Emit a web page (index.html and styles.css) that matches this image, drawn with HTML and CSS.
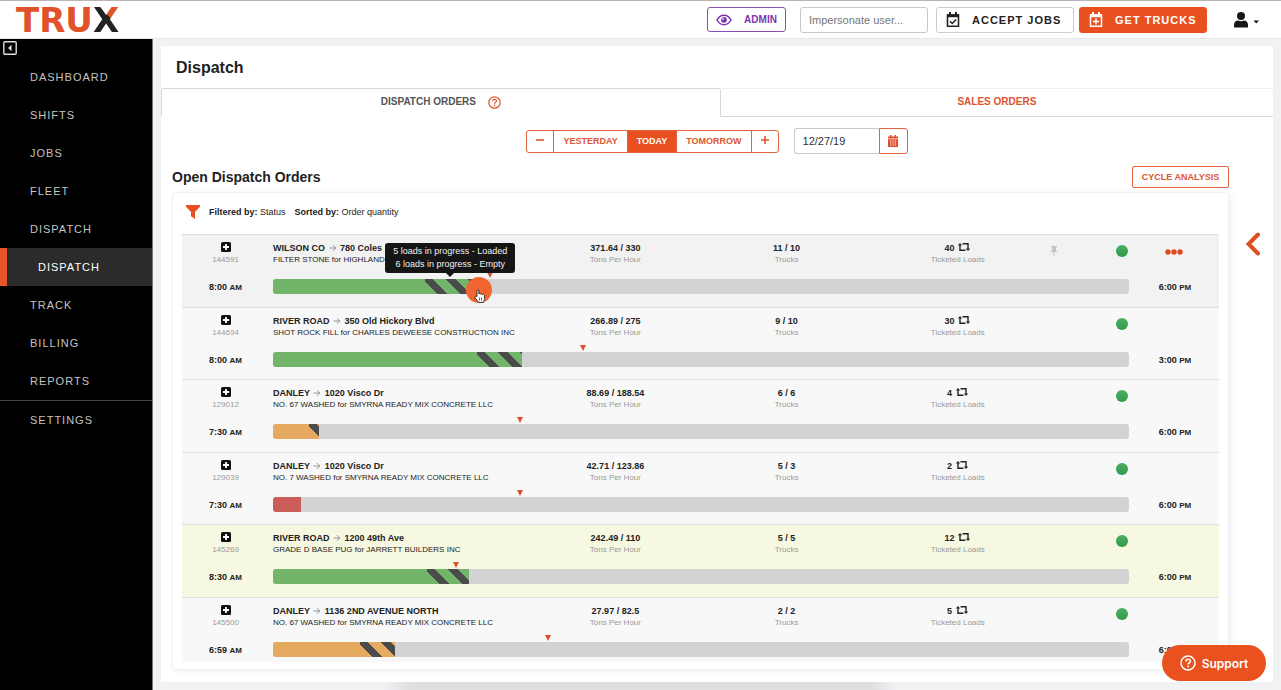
FILE: index.html
```html
<!DOCTYPE html>
<html lang="en">
<head>
    <meta charset="UTF-8">
    <meta name="viewport" content="width=device-width, initial-scale=1.0">
    <title>TRUX - Dispatch</title>
    <link rel="stylesheet" href="styles.css">
</head>
<body>
<!-- shared icons -->
<svg class="sprite" aria-hidden="true">
    <symbol id="i-plus" viewBox="0 0 10 10">
        <rect width="10" height="10" rx="1.5" fill="#111"/>
        <path d="M5 2v6M2 5h6" stroke="#fff" stroke-width="1.8"/>
    </symbol>
    <symbol id="i-arrow" viewBox="0 0 8 8">
        <path d="M0.5 4h6M4 1.2L6.8 4 4 6.8" fill="none" stroke="#888" stroke-width="0.9"/>
    </symbol>
    <symbol id="i-loop" viewBox="0 0 14 10">
        <path d="M5.5 1.8H11v5M8.500 8.2H3v-5" fill="none" stroke="#222" stroke-width="1.4"/>
        <path d="M0.8 3.6L3 1l2.2 2.600zM8.800 6.400L11 9l2.200-2.600z" fill="#222"/>
    </symbol>
    <symbol id="i-help" viewBox="0 0 16 16">
        <circle cx="8" cy="8" r="7" fill="none" stroke="currentColor" stroke-width="1.5"/>
        <path d="M5.8 6.4c0-3 4.6-2.9 4.6-.2 0 1.8-2.3 1.7-2.3 3.3" fill="none" stroke="currentColor" stroke-width="1.5"/>
        <circle cx="8.1" cy="11.6" r="1" fill="currentColor"/>
    </symbol>
</svg>

<header class="topbar">
    <a class="logo" href="#" aria-label="TRUX">TRU<span>X</span></a>
    <div class="top-actions">
        <button class="btn-admin" type="button">
            <svg width="16" height="12" viewBox="0 0 16 12"><path d="M1 6c3.4-6.2 10.6-6.2 14 0-3.4 6.2-10.6 6.2-14 0z" fill="none" stroke="currentColor" stroke-width="1.5"/><circle cx="8" cy="5.8" r="2.9" fill="currentColor"/><circle cx="7" cy="4.8" r="0.9" fill="#fff"/></svg>
            ADMIN
        </button>
        <input class="impersonate" type="text" placeholder="Impersonate user..." aria-label="Impersonate user">
        <button class="btn-top" type="button">
            <svg width="14" height="16" viewBox="0 0 14 16"><path d="M1.5 3h11v11.2h-11z" fill="none" stroke="currentColor" stroke-width="1.6"/><path d="M1 2.2h12v3H1zM3 0h2v3H3zM9 0h2v3H9z" fill="currentColor"/><path d="M4 9.3l2.2 2.2 4-4" fill="none" stroke="currentColor" stroke-width="1.5"/></svg>
            ACCEPT JOBS
        </button>
        <button class="btn-top btn-primary" type="button">
            <svg width="14" height="16" viewBox="0 0 14 16"><path d="M1.5 3h11v11.2h-11z" fill="none" stroke="currentColor" stroke-width="1.6"/><path d="M1 2.2h12v3H1zM3 0h2v3H3zM9 0h2v3H9z" fill="currentColor"/><path d="M7 6.5v6M4 9.5h6" fill="none" stroke="currentColor" stroke-width="1.5"/></svg>
            GET TRUCKS
        </button>
        <button class="user-menu" type="button" aria-label="Account">
            <svg width="26" height="16" viewBox="0 0 26 16"><circle cx="7" cy="4" r="4" fill="#161616"/><path d="M0 15.5V13c0-3 1.800-4.500 4-4.500 2 1 4 1 6 0 2.200 0 4 1.500 4 4.500v2.500z" fill="#161616"/><path d="M19.500 8.500h5.500l-2.750 3z" fill="#161616"/></svg>
        </button>
    </div>
</header>

<div class="layout">
    <nav class="sidebar">
        <button class="collapse" type="button" aria-label="Collapse menu">
            <svg width="14" height="14" viewBox="0 0 14 14"><rect x="0.8" y="0.8" width="12.4" height="12.4" rx="1" fill="none" stroke="#ddd" stroke-width="1.4"/><path d="M8.5 3.8v6.4L5 7z" fill="#ddd"/></svg>
        </button>
        <a href="#">DASHBOARD</a>
        <a href="#">SHIFTS</a>
        <a href="#">JOBS</a>
        <a href="#">FLEET</a>
        <a href="#">DISPATCH</a>
        <a href="#" class="active">DISPATCH</a>
        <a href="#">TRACK</a>
        <a href="#">BILLING</a>
        <a href="#">REPORTS</a>
        <a href="#" class="settings">SETTINGS</a>
    </nav>

    <main class="page">
        <h1>Dispatch</h1>
        <div class="tabs">
            <a href="#" class="tab current">DISPATCH ORDERS <svg width="13" height="13"><use href="#i-help"/></svg></a>
            <a href="#" class="tab">SALES ORDERS</a>
        </div>

        <div class="date-bar">
            <div class="day-group">
                <button type="button" aria-label="Previous day"><svg width="8" height="8" viewBox="0 0 8 8"><path d="M0 4h8" stroke="currentColor" stroke-width="1.6"/></svg></button>
                <button type="button">YESTERDAY</button>
                <button type="button" class="on">TODAY</button>
                <button type="button">TOMORROW</button>
                <button type="button" aria-label="Next day"><svg width="8" height="8" viewBox="0 0 8 8"><path d="M0 4h8M4 0v8" stroke="currentColor" stroke-width="1.6"/></svg></button>
            </div>
            <div class="date-pick">
                <input type="text" value="12/27/19" aria-label="Date">
                <button type="button" aria-label="Open calendar"><svg width="10" height="12" viewBox="0 0 10 12"><path d="M0 1.5h10v2H0zM2 0h1.5v2H2zM6.5 0H8v2H6.5zM0 4.2h10V12H0z" fill="currentColor"/><path d="M2 6h6M2 8h6M2 10h6" stroke="#fff" stroke-width="1" stroke-dasharray="1.2 1.2"/></svg></button>
            </div>
        </div>

        <div class="content">
            <section class="orders">
                <div class="orders-head">
                    <h2>Open Dispatch Orders</h2>
                    <button type="button" class="btn-cycle">CYCLE ANALYSIS</button>
                </div>
                <div class="panel">
                    <div class="filters">
                        <svg width="14" height="14" viewBox="0 0 14 14"><path d="M0 0h14v1.8L9 7v7l-4-2.8V7L0 1.8z" fill="#e8501f"/></svg>
                        <span><b>Filtered by:</b> Status</span>
                        <span><b>Sorted by:</b> Order quantity</span>
                    </div>
                    <div class="scroller">
                        <ul class="order-list">
                            <li class="order hovered">
                                <div class="order-id"><button type="button" aria-label="Expand"><svg width="10" height="10"><use href="#i-plus"/></svg></button><small>144591</small></div>
                                <div class="info">
                                    <div class="name"><b>WILSON CO <svg width="8" height="8"><use href="#i-arrow"/></svg> 780 Coles</b><span>FILTER STONE for HIGHLAND H</span></div>
                                    <div class="stat"><b>371.64 / 330</b><span>Tons Per Hour</span></div>
                                    <div class="stat"><b>11 / 10</b><span>Trucks</span></div>
                                    <div class="stat"><b>40 <svg width="14" height="10"><use href="#i-loop"/></svg></b><span>Ticketed Loads</span></div>
                                    <div class="state"><svg width="8" height="10" viewBox="0 0 8 10"><path d="M1 0h6v1.2H6v3l1.5 1.8h-7L2 4.2v-3H1zM3.5 6h1v4h-1z" fill="#c4c4c4"/></svg><i class="dot"></i></div>
                                </div>
                                <button type="button" class="more" aria-label="More"><svg width="18" height="6" viewBox="0 0 18 6"><circle cx="3" cy="3" r="2.7"/><circle cx="9" cy="3" r="2.7"/><circle cx="15" cy="3" r="2.7"/></svg></button>
                                <time>8:00 <small>AM</small></time>
                                <div class="track green">
                                    <div class="done" style="width:17.8%"></div>
                                    <div class="moving" style="width:5.8%"><div class="tooltip">5 loads in progress - Loaded<br>6 loads in progress - Empty</div></div>
                                    <i class="marker" style="left:25.3%"></i>
                                    <div class="pointer" style="left:24.1%">
                                        <svg width="12" height="14" viewBox="0 0 12 14"><path d="M3 7.5V1.8c0-1.4 1.9-1.4 1.9 0V5c.4-.8 1.7-.6 1.9.2.5-.7 1.6-.4 1.8.4.6-.6 1.9-.3 1.9.8v3c0 2-1 2.5-1 4H4.3C4 11.8 2.2 10.6 1 8.8.3 7.5 1.9 6.5 3 7.5z" fill="#fff" stroke="#222" stroke-width="0.9"/><path d="M5.5 8.5v3M7.5 8.5v3" stroke="#222" stroke-width="0.7"/></svg>
                                    </div>
                                </div>
                                <time>6:00 <small>PM</small></time>
                            </li>
                            <li class="order">
                                <div class="order-id"><button type="button" aria-label="Expand"><svg width="10" height="10"><use href="#i-plus"/></svg></button><small>144694</small></div>
                                <div class="info">
                                    <div class="name"><b>RIVER ROAD <svg width="8" height="8"><use href="#i-arrow"/></svg> 350 Old Hickory Blvd</b><span>SHOT ROCK FILL for CHARLES DEWEESE CONSTRUCTION INC</span></div>
                                    <div class="stat"><b>266.89 / 275</b><span>Tons Per Hour</span></div>
                                    <div class="stat"><b>9 / 10</b><span>Trucks</span></div>
                                    <div class="stat"><b>30 <svg width="14" height="10"><use href="#i-loop"/></svg></b><span>Ticketed Loads</span></div>
                                    <div class="state"><i class="dot"></i></div>
                                </div>
                                <div></div>
                                <time>8:00 <small>AM</small></time>
                                <div class="track green">
                                    <div class="done" style="width:23.8%"></div>
                                    <div class="moving" style="width:5.3%"></div>
                                    <i class="marker" style="left:36.2%"></i>
                                </div>
                                <time>3:00 <small>PM</small></time>
                            </li>
                            <li class="order">
                                <div class="order-id"><button type="button" aria-label="Expand"><svg width="10" height="10"><use href="#i-plus"/></svg></button><small>129012</small></div>
                                <div class="info">
                                    <div class="name"><b>DANLEY <svg width="8" height="8"><use href="#i-arrow"/></svg> 1020 Visco Dr</b><span>NO. 67 WASHED for SMYRNA READY MIX CONCRETE LLC</span></div>
                                    <div class="stat"><b>88.69 / 188.54</b><span>Tons Per Hour</span></div>
                                    <div class="stat"><b>6 / 6</b><span>Trucks</span></div>
                                    <div class="stat"><b>4 <svg width="14" height="10"><use href="#i-loop"/></svg></b><span>Ticketed Loads</span></div>
                                    <div class="state"><i class="dot"></i></div>
                                </div>
                                <div></div>
                                <time>7:30 <small>AM</small></time>
                                <div class="track orange">
                                    <div class="done" style="width:4.2%"></div>
                                    <div class="moving" style="width:1.2%"></div>
                                    <i class="marker" style="left:28.9%"></i>
                                </div>
                                <time>6:00 <small>PM</small></time>
                            </li>
                            <li class="order">
                                <div class="order-id"><button type="button" aria-label="Expand"><svg width="10" height="10"><use href="#i-plus"/></svg></button><small>129039</small></div>
                                <div class="info">
                                    <div class="name"><b>DANLEY <svg width="8" height="8"><use href="#i-arrow"/></svg> 1020 Visco Dr</b><span>NO. 7 WASHED for SMYRNA READY MIX CONCRETE LLC</span></div>
                                    <div class="stat"><b>42.71 / 123.86</b><span>Tons Per Hour</span></div>
                                    <div class="stat"><b>5 / 3</b><span>Trucks</span></div>
                                    <div class="stat"><b>2 <svg width="14" height="10"><use href="#i-loop"/></svg></b><span>Ticketed Loads</span></div>
                                    <div class="state"><i class="dot"></i></div>
                                </div>
                                <div></div>
                                <time>7:30 <small>AM</small></time>
                                <div class="track red">
                                    <div class="done" style="width:3.3%"></div>
                                    <i class="marker" style="left:28.9%"></i>
                                </div>
                                <time>6:00 <small>PM</small></time>
                            </li>
                            <li class="order flagged">
                                <div class="order-id"><button type="button" aria-label="Expand"><svg width="10" height="10"><use href="#i-plus"/></svg></button><small>145269</small></div>
                                <div class="info">
                                    <div class="name"><b>RIVER ROAD <svg width="8" height="8"><use href="#i-arrow"/></svg> 1200 49th Ave</b><span>GRADE D BASE PUG for JARRETT BUILDERS INC</span></div>
                                    <div class="stat"><b>242.49 / 110</b><span>Tons Per Hour</span></div>
                                    <div class="stat"><b>5 / 5</b><span>Trucks</span></div>
                                    <div class="stat"><b>12 <svg width="14" height="10"><use href="#i-loop"/></svg></b><span>Ticketed Loads</span></div>
                                    <div class="state"><i class="dot"></i></div>
                                </div>
                                <div></div>
                                <time>8:30 <small>AM</small></time>
                                <div class="track green">
                                    <div class="done" style="width:18%"></div>
                                    <div class="moving" style="width:4.9%"></div>
                                    <i class="marker" style="left:21.4%"></i>
                                </div>
                                <time>6:00 <small>PM</small></time>
                            </li>
                            <li class="order">
                                <div class="order-id"><button type="button" aria-label="Expand"><svg width="10" height="10"><use href="#i-plus"/></svg></button><small>145500</small></div>
                                <div class="info">
                                    <div class="name"><b>DANLEY <svg width="8" height="8"><use href="#i-arrow"/></svg> 1136 2ND AVENUE NORTH</b><span>NO. 67 WASHED for SMYRNA READY MIX CONCRETE LLC</span></div>
                                    <div class="stat"><b>27.97 / 82.5</b><span>Tons Per Hour</span></div>
                                    <div class="stat"><b>2 / 2</b><span>Trucks</span></div>
                                    <div class="stat"><b>5 <svg width="14" height="10"><use href="#i-loop"/></svg></b><span>Ticketed Loads</span></div>
                                    <div class="state"><i class="dot"></i></div>
                                </div>
                                <div></div>
                                <time>6:59 <small>AM</small></time>
                                <div class="track orange">
                                    <div class="done" style="width:10.2%"></div>
                                    <div class="moving" style="width:4.1%"></div>
                                    <i class="marker" style="left:32.1%"></i>
                                </div>
                                <time>6:00 <small>PM</small></time>
                            </li>
                        </ul>
                    </div>
                </div>
            </section>
            <button type="button" class="drawer" aria-label="Open side panel">
                <svg width="14" height="24" viewBox="0 0 14 24"><path d="M12 2.500L2.500 12l9.500 9.500" fill="none" stroke="#dd4f22" stroke-width="4" stroke-linecap="round"/></svg>
            </button>
        </div>
    </main>
</div>

<button type="button" class="support"><svg width="16" height="16"><use href="#i-help"/></svg>Support</button>
</body>
</html>
```
FILE: styles.css
```css
* {
    box-sizing: border-box;
}

body {
    margin: 0;
    height: 100vh;
    display: flex;
    flex-direction: column;
    overflow: hidden;
    background: #f1f2f4;
    color: #222;
    font-family: "Liberation Sans", Arial, sans-serif;
    font-size: 9px;
}

/* shade along the bottom edge */
body::after {
    content: '';
    position: fixed;
    bottom: 0;
    left: 30%;
    width: 40%;
    height: 8px;
    background: linear-gradient(90deg, transparent, #dedfe1 5% 95%, transparent);
}

button {
    padding: 0;
    border: 0;
    background: none;
    color: inherit;
    font: inherit;
    cursor: pointer;
}

a {
    color: inherit;
    text-decoration: none;
}

svg {
    flex: none;
}

.sprite {
    position: absolute;
    width: 0;
    height: 0;
}

/* top bar */
.topbar {
    display: flex;
    flex: none;
    align-items: center;
    justify-content: space-between;
    height: 39px;
    padding: 0 21px 0 16px;
    background: #fff;
    border-top: 1px solid #b8b4b4;
    border-bottom: 1px solid #e6e7e9;
}

.logo {
    color: #e2522a;
    font-family: "DejaVu Sans", sans-serif;
    font-size: 34px;
    font-weight: bold;
    line-height: 36px;
}

.logo span {
    background: linear-gradient(45deg, #222 60%, #e2522a 60%);
    background-clip: text;
    -webkit-background-clip: text;
    color: transparent;
}

.top-actions {
    display: flex;
    align-items: center;
}

.btn-admin {
    display: flex;
    align-items: center;
    justify-content: center;
    gap: 12px;
    width: 79px;
    height: 25px;
    margin-right: 14px;
    border: 1px solid #8a4fb5;
    border-radius: 3px;
    color: #7b35ad;
    font-size: 10px;
    font-weight: bold;
}

.impersonate {
    width: 128px;
    height: 26px;
    margin-right: 8px;
    padding: 0 8px;
    border: 1px solid #c9c9c9;
    border-radius: 3px;
    font: 11px "Liberation Sans", Arial, sans-serif;
}

.impersonate::placeholder {
    color: #777;
}

.btn-top {
    display: flex;
    align-items: center;
    gap: 12px;
    width: 138px;
    height: 26px;
    margin-right: 5px;
    padding-left: 9px;
    border: 1px solid #ccc;
    border-radius: 3px;
    font-size: 11px;
    font-weight: bold;
    letter-spacing: 1px;
}

.btn-primary {
    width: 128px;
    border-color: #e8501f;
    background: #e8501f;
    color: #fff;
}

.user-menu {
    display: flex;
    margin-left: 22px;
}

/* sidebar */
.layout {
    display: flex;
    flex: 1;
    min-height: 0;
}

.sidebar {
    display: flex;
    flex: none;
    flex-direction: column;
    width: 153px;
    background: #000;
    border-right: 1px solid #777;
    color: #c4c4c4;
    font-size: 11px;
    letter-spacing: 1px;
    line-height: 38px;
}

.collapse {
    display: flex;
    width: 14px;
    margin: 2px 0 3px 3px;
}

.sidebar a {
    padding-left: 30px;
}

.sidebar .active {
    padding-left: 31px;
    border-left: 7px solid #e8552b;
    background: #2b2b2b;
    color: #fff;
}

.sidebar .settings {
    border-top: 1px solid #444;
}

/* page card */
.page {
    display: flex;
    flex: 1;
    flex-direction: column;
    min-width: 0;
    margin: 7px 8px 8px;
    background: #fff;
}

h1 {
    margin: 0;
    padding: 2px 0 0 15px;
    font-size: 16px;
    line-height: 40px;
}

.tabs {
    display: flex;
    font-weight: bold;
    line-height: 26px;
}

.tab {
    display: flex;
    flex: 1;
    align-items: center;
    justify-content: center;
    gap: 12px;
    padding-bottom: 1px;
    border-top: 1px solid #eee;
    border-bottom: 1px solid #d8d8d8;
    color: #dd5530;
    font-size: 10px;
}

.tab.current {
    flex-grow: 1.01;
    border: 1px solid #d8d8d8;
    border-bottom-color: transparent;
    border-radius: 3px 3px 0 0;
    color: #555;
}

.tab svg {
    color: #dd5530;
}

.date-bar {
    display: flex;
    align-items: center;
    justify-content: center;
    gap: 15px;
    padding: 11px 0 12px;
}

.day-group {
    display: flex;
    height: 23px;
    border: 1px solid #e0623e;
    border-radius: 3px;
    color: #dd5530;
    font-weight: bold;
}

.day-group button {
    padding: 0 9px;
}

.day-group button + button {
    border-left: 1px solid #e0623e;
}

.day-group .on {
    background: #e8501f;
    color: #fff;
}

.date-pick {
    display: flex;
    height: 26px;
}

.date-pick input {
    width: 85px;
    padding: 0 8px;
    border: 1px solid #c9c9c9;
    border-right: 0;
    border-radius: 3px 0 0 3px;
    color: #333;
    font: 11px "Liberation Sans", Arial, sans-serif;
}

.date-pick button {
    display: flex;
    align-items: center;
    justify-content: center;
    width: 29px;
    border: 1px solid #e0623e;
    border-radius: 0 3px 3px 0;
    color: #e0502a;
}

/* orders */
.content {
    display: flex;
    flex: 1;
    min-height: 0;
    padding: 0 13px 12px 11px;
}

.orders {
    display: flex;
    flex: 1;
    flex-direction: column;
    min-width: 0;
}

.orders-head {
    display: flex;
    align-items: center;
    justify-content: space-between;
    margin-bottom: 4px;
}

h2 {
    margin: 0;
    font-size: 14px;
    line-height: 20px;
}

.btn-cycle {
    width: 97px;
    height: 22px;
    border: 1px solid #e0623e;
    border-radius: 2px;
    color: #dd5530;
    font-weight: bold;
}

.panel {
    display: flex;
    flex: 1;
    flex-direction: column;
    min-height: 0;
    padding: 0 9px 7px;
    border: 1px solid #f0f0f2;
    border-radius: 3px;
    box-shadow: 2px 2px 6px rgba(0, 0, 0, 0.06);
}

.filters {
    display: flex;
    align-items: center;
    gap: 9px;
    height: 41px;
    padding: 0 0 3px 4px;
}

.scroller {
    flex: 1;
    min-height: 0;
    overflow-y: auto;
    scrollbar-width: none;
}

.order-list {
    display: grid;
    grid-auto-rows: 1fr;
    min-height: 435px;
    margin: 0;
    padding: 0;
    list-style: none;
}

.order {
    display: grid;
    grid-template-columns: 91px 1fr 90px;
    grid-template-rows: 38px 15px;
    align-content: start;
    padding-top: 6px;
    border-top: 1px solid #dedede;
    background: #f8f8f8;
    white-space: nowrap;
}

.order.hovered {
    background: #f2f2f2;
}

.order.flagged {
    background: #f7f8e1;
}

.order-id {
    padding-right: 4px;
    color: #999;
    line-height: 12px;
    text-align: center;
}

.order-id button,
.order-id svg {
    display: block;
    margin: 0 auto;
}

.order-id button {
    height: 12px;
}

.order-id small {
    font-size: 8px;
}

.info {
    display: grid;
    grid-template-columns: 3fr 2fr 2fr 2fr 1fr;
    line-height: 12px;
}

.info > div {
    min-width: 0;
}

.info b,
.info span {
    display: block;
}

.name b svg,
.stat b svg {
    vertical-align: -1px;
}

.name b svg {
    margin: 0 1px;
}

.name span {
    font-size: 8px;
}

.name,
.stat {
    padding-top: 1px;
}

.stat {
    text-align: center;
}

.stat span {
    color: #999;
    font-size: 8px;
}

.state {
    display: flex;
    align-items: center;
    height: 20px;
    padding: 0 1px 0 7px;
}

.dot {
    width: 12px;
    height: 12px;
    margin-left: auto;
    border-radius: 50%;
    background: linear-gradient(#4fae62, #2f9a4b);
}

.more {
    display: flex;
    align-items: center;
    justify-content: center;
    height: 21px;
    fill: #dd4a1e;
}

.order time {
    padding-right: 4px;
    font-size: 9px;
    font-weight: bold;
    line-height: 16px;
    text-align: center;
}

.order time:last-child {
    padding: 0 0 0 2px;
}

.order time small {
    font-size: 8px;
}

/* progress */
.track {
    position: relative;
    display: flex;
    height: 15px;
    border-radius: 3px;
    background: #d3d3d3;
}

.done {
    border-radius: 3px 0 0 3px;
}

.green > .done,
.green > .moving {
    background-color: #72b56a;
}

.orange > .done,
.orange > .moving {
    background-color: #e5aa60;
}

.red > .done {
    background-color: #cb5d59;
}

.moving {
    position: relative;
    background-image: repeating-linear-gradient(45deg, transparent 0 9px, #4b4b4b 9px 16px);
}

.marker {
    position: absolute;
    top: -7px;
    margin-left: -3px;
    border: 3px solid transparent;
    border-top: 6px solid #dd4f2a;
    border-bottom: 0;
}

.tooltip {
    position: absolute;
    bottom: 21px;
    left: 50%;
    z-index: 2;
    width: 130px;
    padding: 2px 0;
    border-radius: 3px;
    background: #151515;
    color: #f2f2f2;
    font-size: 9px;
    line-height: 13px;
    text-align: center;
    transform: translateX(-50%);
}

.tooltip::after {
    content: '';
    position: absolute;
    top: 100%;
    left: 50%;
    margin-left: -4px;
    border: 4px solid transparent;
    border-top-color: #151515;
    border-bottom: 0;
}

.pointer {
    position: absolute;
    top: -2px;
    width: 26px;
    height: 26px;
    margin-left: -13px;
    padding: 12px 0 0 8px;
    border-radius: 50%;
    background: #f26430;
}

.drawer {
    align-self: flex-start;
    margin: 66px 0 0 17px;
}

.support {
    position: fixed;
    right: 15px;
    bottom: 9px;
    display: flex;
    align-items: center;
    justify-content: center;
    gap: 6px;
    width: 104px;
    height: 36px;
    border-radius: 18px;
    background: #e9511f;
    color: #fff;
    font: 600 12px Inter, sans-serif;
}
```
